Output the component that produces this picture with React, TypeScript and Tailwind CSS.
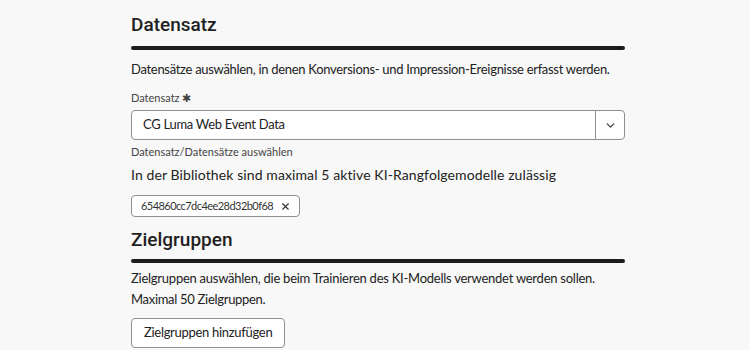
import { ChevronDown, X } from "lucide-react";

const SectionTitle = ({ title, gap }: { title: string; gap: string }) => (
  <div>
    <h2
      className="text-[19px] leading-[26px] font-medium text-[#1f1f1f]"
      style={{ fontFamily: "Roboto, Lato, sans-serif" }}
    >
      {title}
    </h2>
    <div className={`${gap} h-[4px] rounded-full bg-[#1d1d1d]`} />
  </div>
);

export default function App() {
  return (
    <div
      className="min-h-[350px] w-[750px] bg-[#f8f8f8] text-[#222] overflow-hidden"
      style={{ fontFamily: "Lato, 'Noto Sans', sans-serif" }}
    >
      <div className="ml-[131px] w-[494px] pt-[12px]">
        <SectionTitle title="Datensatz" gap="mt-[8px]" />
        <p className="mt-[10px] text-[13px] leading-[18px] tracking-[-0.3px] whitespace-nowrap">
          Datensätze auswählen, in denen Konversions- und Impression-Ereignisse erfasst werden.
        </p>

        <div className="mt-[13px] text-[11px] leading-[14px] text-[#444]">Datensatz ✱</div>
        <div className="mt-[5px] flex h-[30px] rounded-[4px] border border-[#8f8f8f] bg-white">
          <div className="flex flex-1 items-center px-[11px] text-[13px] tracking-[-0.3px]">CG Luma Web Event Data</div>
          <div className="flex w-[29px] items-center justify-center border-l border-[#8f8f8f]">
            <ChevronDown size={13} strokeWidth={2.5} className="text-[#444]" />
          </div>
        </div>
        <div className="mt-[5px] text-[11px] leading-[14px] text-[#444]">Datensatz/Datensätze auswählen</div>
        <p className="mt-[7px] text-[14px] leading-[18px] tracking-[0.1px]">
          In der Bibliothek sind maximal 5 aktive KI-Rangfolgemodelle zulässig
        </p>

        <div className="mt-[11px] inline-flex h-[22px] items-center gap-[7px] rounded-[4px] border border-[#8f8f8f] bg-white pl-[9px] pr-[8px] text-[11px] tracking-[-0.55px] text-[#333]">
          <span>654860cc7dc4ee28d32b0f68</span>
          <X size={11} strokeWidth={2.5} />
        </div>

        <div className="mt-[10px]">
          <SectionTitle title="Zielgruppen" gap="mt-[6px]" />
        </div>
        <p className="mt-[6px] text-[13px] leading-[18px] tracking-[-0.25px]">
          Zielgruppen auswählen, die beim Trainieren des KI-Modells verwendet werden sollen.
        </p>
        <p className="mt-[3px] text-[13px] leading-[18px] tracking-[-0.3px]">Maximal 50 Zielgruppen.</p>
        <button className="mt-[10px] h-[30px] rounded-[4px] border border-[#8f8f8f] bg-white px-[12px] text-[13px] tracking-[-0.3px] text-[#222]">
          Zielgruppen hinzufügen
        </button>
      </div>
    </div>
  );
}
